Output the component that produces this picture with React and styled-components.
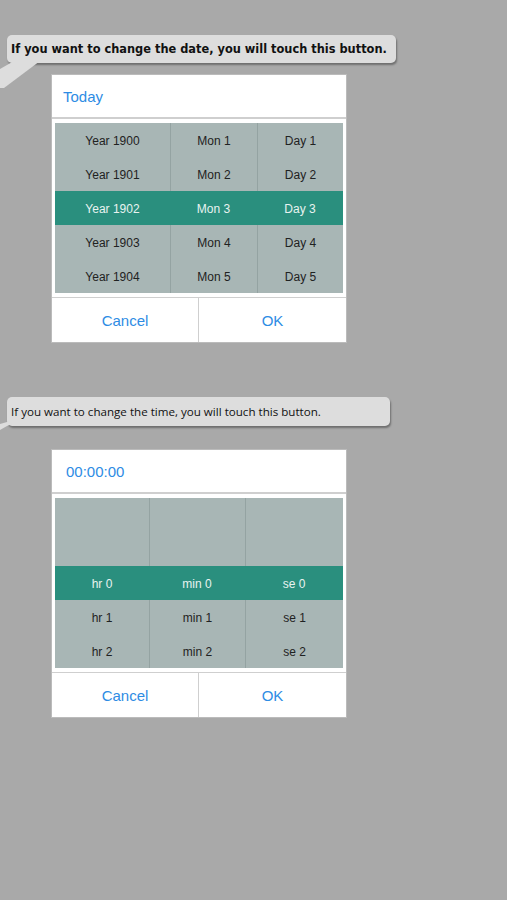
import React from "react";
import styled, { createGlobalStyle } from "styled-components";

const Global = createGlobalStyle`
  html, body { margin: 0; padding: 0; background: #a9a9a9; }
  body { font-family: "Liberation Sans", Arial, sans-serif; }
  #root { min-height: 900px; }
`;

const Page = styled.div`
  width: 507px;
  min-height: 900px;
  background: #a9a9a9;
  display: flex;
  flex-direction: column;
  padding-top: 35px;
  box-sizing: border-box;
`;

const Bubble = styled.div`
  position: relative;
  margin-left: 7px;
  width: ${(p) => p.$w}px;
  height: ${(p) => p.$h}px;
  box-sizing: border-box;
  background: #dddddd;
  border-radius: 5px;
  box-shadow: 1px 2px 2px rgba(0, 0, 0, 0.35);
  display: flex;
  align-items: center;
  padding-left: 4px;
  font-family: ${(p) => (p.$bold ? `"DejaVu Sans", Verdana, sans-serif` : `"Open Sans", sans-serif`)};
  font-weight: ${(p) => (p.$bold ? 700 : 400)};
  font-size: ${(p) => p.$fs}px;
  letter-spacing: ${(p) => p.$ls || 0}px;
  color: #111;
  white-space: nowrap;
`;

const Tail = styled.svg`
  position: absolute;
  left: -7px;
  top: ${(p) => p.$top}px;
  overflow: visible;
`;

const Dialog = styled.div`
  margin-left: 52px;
  margin-top: ${(p) => p.$mt}px;
  width: 294px;
  background: #fff;
  display: flex;
  flex-direction: column;
  box-shadow: 0 0 0 1px rgba(200, 200, 200, 0.6);
`;

const Header = styled.div`
  height: 42px;
  border-bottom: 2px solid #cfcfcf;
  display: flex;
  align-items: center;
  padding-left: ${(p) => p.$pl}px;
  color: #2e8ce4;
  font-size: 15px;
`;

const PickerWrap = styled.div`
  padding: 4px 3px;
  border-bottom: 1px solid #cfcfcf;
`;

const Picker = styled.div`
  display: grid;
  grid-template-columns: ${(p) => p.$cols};
  background: #a8b6b5;
`;

const Column = styled.div`
  display: flex;
  flex-direction: column;
  border-left: ${(p) => (p.$first ? "none" : "1px solid #94a3a2")};
`;

const Cell = styled.div`
  height: 34px;
  display: flex;
  align-items: center;
  justify-content: center;
  font-size: 12px;
  padding-top: 1px;
  box-sizing: border-box;
  color: ${(p) => (p.$sel ? "#e8f3f0" : "#1f2222")};
  background: ${(p) => (p.$sel ? "#2a8f7e" : "transparent")};
  margin-left: ${(p) => (p.$sel && !p.$first ? "-1px" : "0")};
`;

const Footer = styled.div`
  display: grid;
  grid-template-columns: 146px 1fr;
  height: 44px;
`;

const Btn = styled.div`
  display: flex;
  align-items: center;
  justify-content: center;
  color: #2e8ce4;
  font-size: 15px;
  border-left: ${(p) => (p.$divider ? "1px solid #cfcfcf" : "none")};
`;

function PickerDialog({ title, titlePad, cols, columns, mt }) {
  return (
    <Dialog $mt={mt}>
      <Header $pl={titlePad}>{title}</Header>
      <PickerWrap>
        <Picker $cols={cols}>
          {columns.map((col, ci) => (
            <Column key={ci} $first={ci === 0}>
              {col.map((c, ri) => (
                <Cell key={ri} $sel={c.sel} $first={ci === 0}>
                  {c.t}
                </Cell>
              ))}
            </Column>
          ))}
        </Picker>
      </PickerWrap>
      <Footer>
        <Btn>Cancel</Btn>
        <Btn $divider>OK</Btn>
      </Footer>
    </Dialog>
  );
}

const dateCols = [
  ["Year 1900", "Year 1901", "Year 1902", "Year 1903", "Year 1904"],
  ["Mon 1", "Mon 2", "Mon 3", "Mon 4", "Mon 5"],
  ["Day 1", "Day 2", "Day 3", "Day 4", "Day 5"],
].map((c) => c.map((t, i) => ({ t, sel: i === 2 })));

const timeCols = [
  ["", "", "hr 0", "hr 1", "hr 2"],
  ["", "", "min 0", "min 1", "min 2"],
  ["", "", "se 0", "se 1", "se 2"],
].map((c) => c.map((t, i) => ({ t, sel: i === 2 })));

export default function App() {
  return (
    <>
      <Global />
      <Page>
        <Bubble $w={389} $h={28} $bold $fs={11.4} $ls={0}>
          If you want to change the date, you will touch this button.
          <Tail $top={26} width="40" height="30">
            <polygon points="14,0 40,0 4,27 0,27 0,8" fill="#dddddd" />
          </Tail>
        </Bubble>
        <PickerDialog
          mt={12}
          title="Today"
          titlePad={11}
          cols="115px 87px 1fr"
          columns={dateCols}
        />
        <div style={{ height: 55 }} />
        <Bubble $w={383} $h={29} $fs={11.6}>
          If you want to change the time, you will touch this button.
          <Tail $top={25} width="20" height="10">
            <polygon points="7,0 16,0 7,4 0,8 0,2" fill="#dddddd" />
          </Tail>
        </Bubble>
        <PickerDialog
          mt={24}
          title="00:00:00"
          titlePad={14}
          cols="94px 96px 1fr"
          columns={timeCols}
        />
      </Page>
    </>
  );
}
